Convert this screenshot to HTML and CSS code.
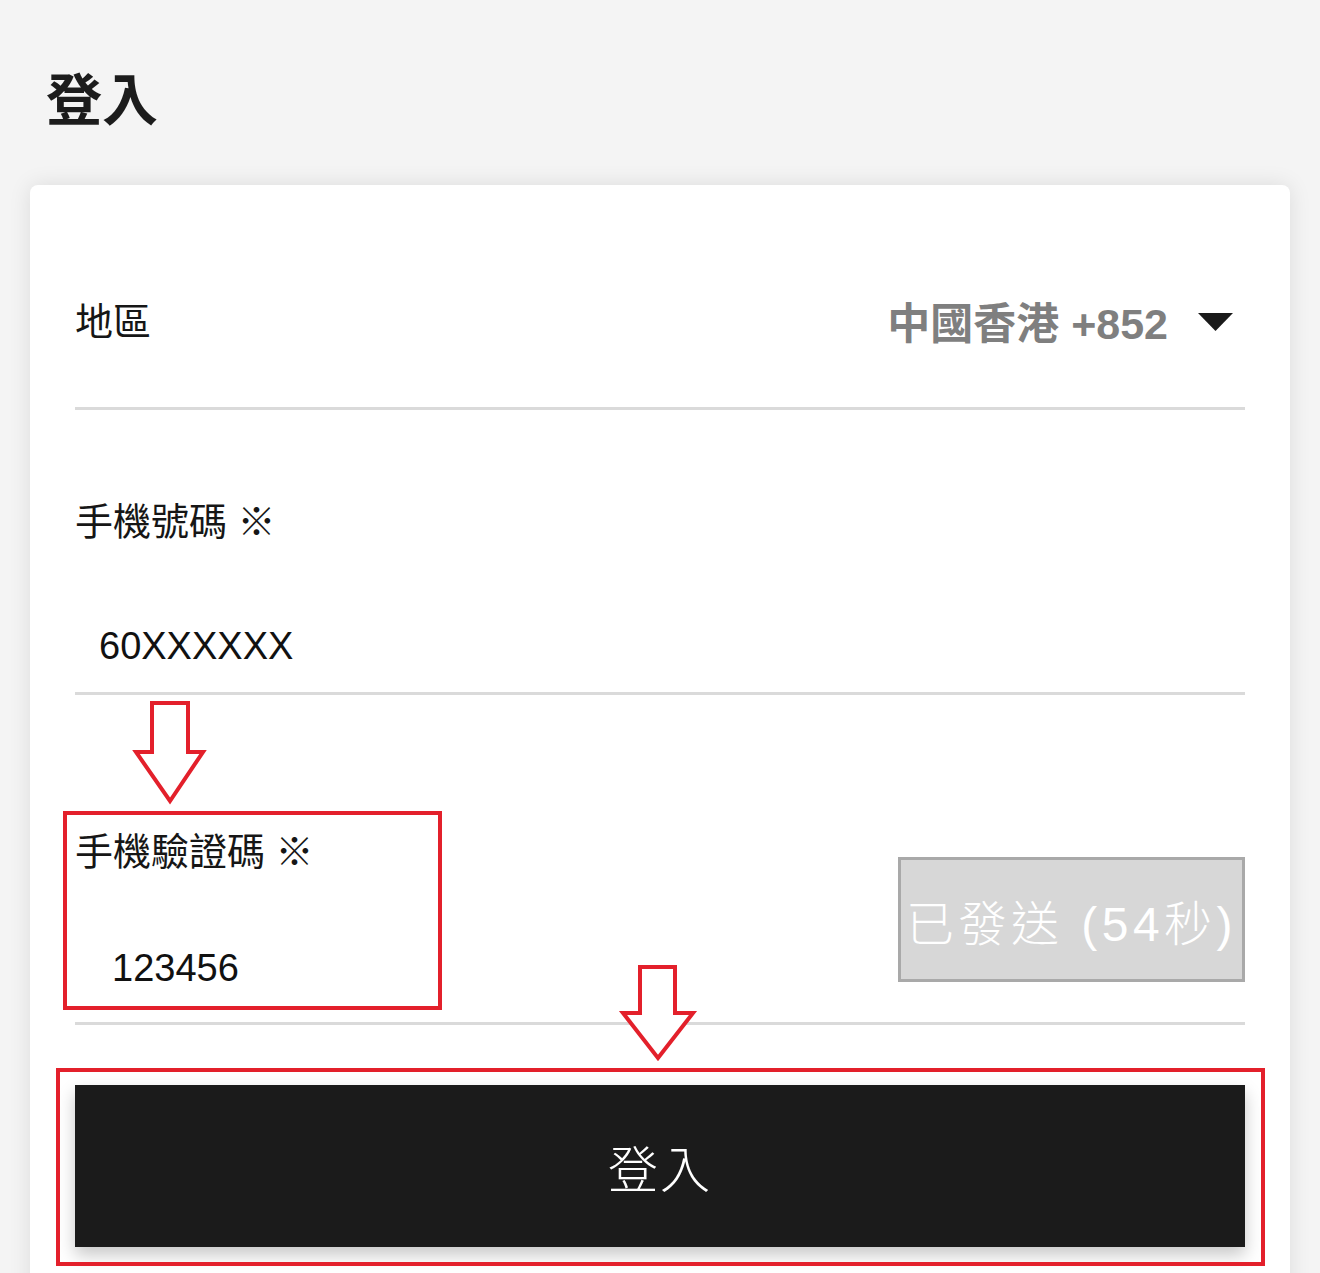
FILE: index.html
```html
<!DOCTYPE html>
<html lang="zh-Hant">
<head>
<meta charset="utf-8">
<title>登入</title>
<link rel="stylesheet" href="styles.css">
</head>
<body>
  <header class="page-head">
    <h1 class="page-title">登入</h1>
  </header>

  <main class="card">
    <div class="field field-region">
      <span class="label">地區</span>
      <span class="region-select">
        <span class="region-value">中國香港 +852</span>
        <svg class="caret" width="35" height="18" viewBox="0 0 35 18"><polygon points="0,0 35,0 17.5,18" fill="#1a1a1a"/></svg>
      </span>
    </div>

    <div class="field field-phone">
      <div class="label">手機號碼 ※</div>
      <div class="value value-phone">60XXXXXX</div>
    </div>

    <div class="field field-code">
      <div class="code-col">
        <div class="label">手機驗證碼 ※</div>
        <div class="value value-code">123456</div>
      </div>
      <div class="send-btn">已發送 (54秒)</div>
    </div>

    <div class="login-btn">登入</div>
  </main>

  <svg class="annotations" width="1320" height="1273" viewBox="0 0 1320 1273">
    <g fill="#ffffff" stroke="#e3202b" stroke-width="4" stroke-linejoin="miter">
      <polygon points="152,703 188,703 188,752 203,752 170,801 136,752 152,752"/>
      <polygon points="640,967 675,967 675,1013 693,1013 658,1058 623,1013 640,1013"/>
    </g>
    <g fill="none" stroke="#e3202b" stroke-width="4">
      <rect x="65" y="813" width="375" height="195"/>
      <rect x="58" y="1070" width="1205" height="194"/>
    </g>
  </svg>
</body>
</html>
```

FILE: styles.css
```css
html, body {
  margin: 0;
  padding: 0;
  overflow: hidden;
}

body {
  background: #f4f4f4;
  font-family: "Liberation Sans", "Noto Sans CJK TC", sans-serif;
  color: #1a1a1a;
  width: 1320px;
  height: 1273px;
  position: relative;
}

.page-head {
  padding: 66px 0 0 46px;
  height: 185px;
  box-sizing: border-box;
}

.page-title {
  margin: 0;
  font-family: "Noto Sans CJK TC", sans-serif;
  font-size: 56px;
  line-height: 60px;
  font-weight: 700;
  color: #1c1c1c;
}

.card {
  margin: 0 30px;
  background: #ffffff;
  border-radius: 8px;
  box-shadow: 0 0 22px rgba(0, 0, 0, 0.10);
  padding: 0 45px 60px;
}

.field {
  border-bottom: 3px solid #dadada;
}

.label {
  font-size: 38px;
  line-height: 44px;
  color: #161616;
  white-space: nowrap;
}

.value {
  font-size: 38px;
  line-height: 44px;
  color: #111111;
}

.field-region {
  display: flex;
  justify-content: space-between;
  align-items: center;
  padding: 115px 0 63px;
  height: 44px;
}

.region-select {
  display: flex;
  align-items: center;
  gap: 30px;
  padding-right: 12px;
}

.region-value {
  font-size: 43px;
  line-height: 44px;
  font-weight: 700;
  color: #7f7f7f;
  padding-top: 4px;
}

.caret {
  display: block;
}

.field-phone {
  padding: 90px 0 24px;
}

.value-phone {
  margin-top: 80px;
  padding-left: 24px;
}

.field-code {
  display: flex;
  justify-content: space-between;
  align-items: flex-end;
  padding: 135px 0 32px;
}

.value-code {
  margin-top: 72px;
  padding-left: 37px;
}

.send-btn {
  box-sizing: border-box;
  width: 347px;
  height: 125px;
  margin-bottom: 8px;
  background: #d7d7d7;
  border: 3px solid #a9a9a9;
  color: #ffffff;
  font-size: 48px;
  font-weight: 300;
  letter-spacing: 4.5px;
  display: flex;
  align-items: center;
  justify-content: center;
  white-space: nowrap;
}

.login-btn {
  margin-top: 60px;
  height: 162px;
  background: #1b1b1b;
  color: #ffffff;
  font-size: 50px;
  font-weight: 300;
  letter-spacing: 2px;
  display: flex;
  align-items: center;
  justify-content: center;
  box-shadow: 0 8px 16px rgba(0, 0, 0, 0.22);
}

.annotations {
  position: absolute;
  top: 0;
  left: 0;
  pointer-events: none;
}
```
